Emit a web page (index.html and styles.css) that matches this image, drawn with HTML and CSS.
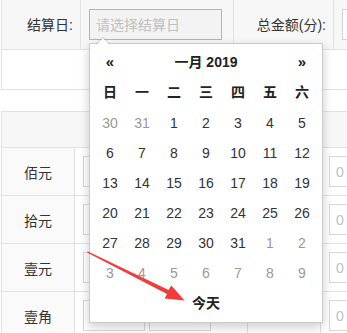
FILE: index.html
```html
<!DOCTYPE html>
<html lang="zh-CN">

<head>
    <meta charset="UTF-8">
    <meta name="viewport" content="width=device-width, initial-scale=1.0">
    <title>结算</title>
    <link rel="stylesheet" href="styles.css">
</head>

<body>
    <table class="form-top">
        <colgroup>
            <col class="c-label">
            <col class="c-input">
            <col class="c-label2">
            <col class="c-rest">
        </colgroup>
        <tr class="row-grey">
            <td class="label">结算日:</td>
            <td><input class="date-input" type="text" placeholder="请选择结算日" readonly></td>
            <td class="label">总金额(分):</td>
            <td><input class="sum-input" type="text"></td>
        </tr>
        <tr class="row-empty">
            <td colspan="4"></td>
        </tr>
    </table>

    <table class="form-money">
        <colgroup>
            <col class="m-label">
            <col class="m-input">
            <col class="m-mid">
            <col class="m-rest">
        </colgroup>
        <tr class="head">
            <td colspan="4"></td>
        </tr>
        <tr>
            <td class="name">佰元</td>
            <td><input class="num" placeholder="0"><input class="num" placeholder="0"></td>
            <td></td>
            <td><input class="num" placeholder="0"></td>
        </tr>
        <tr>
            <td class="name">拾元</td>
            <td><input class="num" placeholder="0"><input class="num" placeholder="0"></td>
            <td></td>
            <td><input class="num" placeholder="0"></td>
        </tr>
        <tr>
            <td class="name">壹元</td>
            <td><input class="num" placeholder="0"><input class="num" placeholder="0"></td>
            <td></td>
            <td><input class="num" placeholder="0"></td>
        </tr>
        <tr>
            <td class="name">壹角</td>
            <td><input class="num" placeholder="0"><input class="num" placeholder="0"></td>
            <td></td>
            <td><input class="num" placeholder="0"></td>
        </tr>
    </table>

    <!-- 日期选择下拉 -->
    <div class="datepicker">
        <table>
            <colgroup>
                <col><col><col><col><col><col><col>
            </colgroup>
            <thead>
                <tr class="switch-row">
                    <th class="prev">&laquo;</th>
                    <th colspan="5">一月 2019</th>
                    <th class="next">&raquo;</th>
                </tr>
                <tr class="dow-row">
                    <th>日</th><th>一</th><th>二</th><th>三</th><th>四</th><th>五</th><th>六</th>
                </tr>
            </thead>
            <tbody>
                <tr><td class="old">30</td><td class="old">31</td><td>1</td><td>2</td><td>3</td><td>4</td><td>5</td></tr>
                <tr><td>6</td><td>7</td><td>8</td><td>9</td><td>10</td><td>11</td><td>12</td></tr>
                <tr><td>13</td><td>14</td><td>15</td><td>16</td><td>17</td><td>18</td><td>19</td></tr>
                <tr><td>20</td><td>21</td><td>22</td><td>23</td><td>24</td><td>25</td><td>26</td></tr>
                <tr><td>27</td><td>28</td><td>29</td><td>30</td><td>31</td><td class="new">1</td><td class="new">2</td></tr>
                <tr><td class="new">3</td><td class="new">4</td><td class="new">5</td><td class="new">6</td><td class="new">7</td><td class="new">8</td><td class="new">9</td></tr>
            </tbody>
            <tfoot>
                <tr><th colspan="7" class="today">今天</th></tr>
            </tfoot>
        </table>
    </div>

    <!-- 标注箭头 -->
    <svg class="mark-arrow" width="347" height="333" viewBox="0 0 347 333">
        <polygon points="87.5,251.2 168.6,289.9 171.3,285.4 184.5,300.5 164.6,298.6 167,294 87.5,252.8" fill="#f23b3b"/>
    </svg>
</body>

</html>
```

FILE: styles.css
```css
* {
    margin: 0;
    padding: 0;
    box-sizing: border-box;
}

body {
    width: 347px;
    height: 333px;
    overflow: hidden;
    position: relative;
    font-family: "Liberation Sans", "Noto Sans CJK SC", sans-serif;
    font-size: 14px;
    color: #333;
    background-color: #fff;
}

table {
    border-collapse: collapse;
    table-layout: fixed;
}

td {
    border: 1px solid #e2e2e2;
    overflow: hidden;
}

input {
    font-family: inherit;
    font-size: 14px;
    outline: none;
}

input::placeholder {
    color: #c0c0c0;
}

/* 上面一块 */
.form-top {
    width: 346px;
    margin-left: 1px;
    margin-top: -1px;
}

.c-label {
    width: 79px;
}

.c-input {
    width: 153px;
}

.c-label2 {
    width: 100px;
}

.c-rest {
    width: 14px;
}

.row-grey td {
    height: 50px;
    background-color: #f7f7f7;
}

.form-top .label {
    text-align: right;
    padding-right: 7px;
    line-height: 20px;
    white-space: nowrap;
}

.date-input {
    display: block;
    width: 133px;
    height: 31px;
    margin-left: 8px;
    padding-left: 6px;
    border: 1px solid #b4b4b4;
    background-color: #f3f3f3;
}

.sum-input {
    display: block;
    width: 120px;
    height: 31px;
    margin-left: 8px;
    border: 1px solid #d4d4d4;
    background-color: #fff;
}

.row-empty td {
    height: 40px;
}

/* 钱币表 */
.form-money {
    width: 346px;
    margin-left: 1px;
    margin-top: 21px;
}

.m-label {
    width: 73px;
}

.m-input {
    width: 173px;
}

.m-mid {
    width: 73px;
}

.m-rest {
    width: 27px;
}

.form-money .head td {
    height: 36px;
    background-color: #f7f7f7;
}

.form-money tr td {
    height: 48px;
    vertical-align: middle;
}

.form-money .name {
    background-color: #fafafa;
    text-align: center;
}

.form-money td:nth-child(2),
.form-money td:nth-child(4) {
    padding-left: 8px;
    white-space: nowrap;
}

.num {
    display: inline-block;
    vertical-align: middle;
    width: 62px;
    height: 31px;
    margin-right: 4px;
    padding-left: 6px;
    border: 1px solid #d8d8d8;
    background-color: #fff;
}

/* 日期选择 */
.datepicker {
    position: absolute;
    left: 89px;
    top: 43px;
    width: 234px;
    padding: 4px;
    background-color: #fff;
    border: 1px solid rgba(0, 0, 0, .2);
    box-shadow: 0 4px 10px rgba(0, 0, 0, .2);
}

.datepicker:before {
    content: "";
    position: absolute;
    top: -7px;
    left: 6px;
    border-left: 7px solid transparent;
    border-right: 7px solid transparent;
    border-bottom: 7px solid rgba(0, 0, 0, .2);
}

.datepicker:after {
    content: "";
    position: absolute;
    top: -6px;
    left: 7px;
    border-left: 6px solid transparent;
    border-right: 6px solid transparent;
    border-bottom: 6px solid #fff;
}

.datepicker table {
    width: 224px;
}

.datepicker col {
    width: 32px;
}

.datepicker th,
.datepicker td {
    height: 30px;
    border: 0;
    text-align: center;
    line-height: 20px;
    padding: 0;
    overflow: visible;
}

.datepicker th {
    font-weight: bold;
    color: #222;
}

.datepicker .switch-row th {
    height: 28px;
}

.datepicker .dow-row th {
    height: 32px;
}

.datepicker .prev,
.datepicker .next {
    font-size: 15px;
}

.datepicker td {
    color: #333;
}

.datepicker td.old,
.datepicker td.new {
    color: #999;
}

.mark-arrow {
    position: absolute;
    left: 0;
    top: 0;
    pointer-events: none;
}
```
